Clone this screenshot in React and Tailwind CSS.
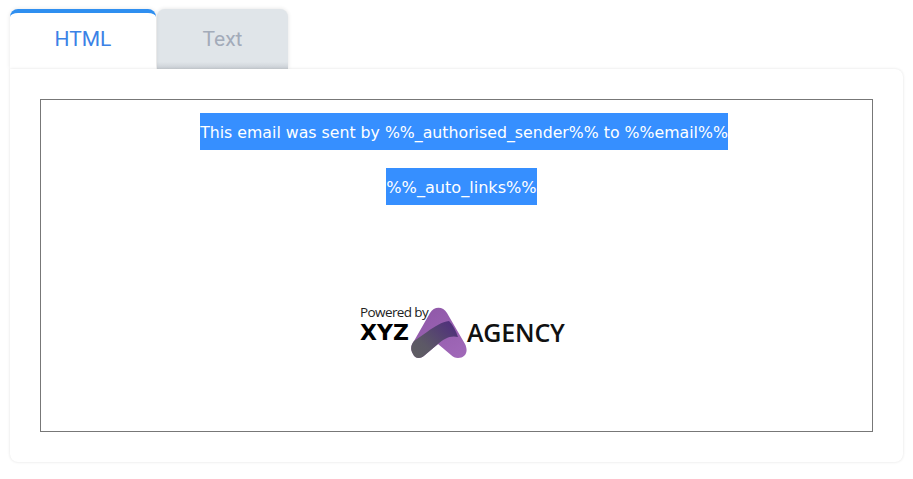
import React from 'react';

function Logo() {
  return (
    <div className="flex items-center w-[206px] h-[56px] relative">
      <div className="absolute left-0 top-[1px] font-['Open_Sans',sans-serif] text-[13.5px] leading-[14px] tracking-[-0.6px] text-[#222]">
        Powered by
      </div>
      <div className="absolute left-0 top-[19px] font-['DejaVu_Sans',sans-serif] font-bold text-[22px] leading-[20px] text-black">
        XYZ
      </div>
      <svg className="absolute left-[51px] top-[3px]" width="58" height="54" viewBox="0 0 58 54" xmlns="http://www.w3.org/2000/svg">
        <defs>
          <linearGradient id="logo-a" x1="20%" y1="0%" x2="80%" y2="100%">
            <stop stopColor="#8f58a8" offset="0%" />
            <stop stopColor="#a068b8" offset="100%" />
          </linearGradient>
          <linearGradient id="logo-b" x1="0%" y1="100%" x2="100%" y2="20%">
            <stop stopColor="#5f5f62" offset="0%" />
            <stop stopColor="#5c5866" offset="35%" />
            <stop stopColor="#4f2f7c" offset="100%" />
          </linearGradient>
        </defs>
        <path d="M19 6 C23 -1 32 -1 36 6 L54 37 C58 45 54 51 47 51 C44 51 42 50 40 48 L27 37 L14 48 C10 52 4 52 2 47 C-1 42 0 38 3 34 Z" fill="url(#logo-a)" />
        <path d="M3 34 L16 25 C24 19 31 15 38 14 C42 18 45 24 47 30 C39 28 33 32 27 37 L14 48 C10 52 4 52 2 47 C-1 42 0 38 3 34 Z" fill="url(#logo-b)" />
      </svg>
      <div className="absolute left-[107px] top-[13px] font-['Open_Sans',sans-serif] font-semibold text-[25px] leading-[30px] tracking-[-0.2px] text-[#111]">
        AGENCY
      </div>
    </div>
  );
}

export default function App() {
  return (
    <div className="min-h-[479px] bg-white pt-[9px] pl-[10px] pr-[10px]">
      {/* Tabs */}
      <div className="flex h-[60px] font-['Roboto',sans-serif] text-[21px]">
        <div className="w-[146px] rounded-t-[8px] border-t-[4px] border-[#2f8ff0] bg-white shadow-[0_0_4px_rgba(0,0,0,0.1)] flex items-center justify-center pb-[3px] text-[#3b82e6] relative z-10">
          HTML
        </div>
        <div className="w-[131px] ml-[1px] rounded-t-[8px] bg-[#e0e5e9] bg-[linear-gradient(to_bottom,#e0e5e9_53px,#c9ced4)] shadow-[0_0_4px_rgba(0,0,0,0.12)] flex items-center justify-center pt-[1px] text-[#a3abb9]">
          Text
        </div>
      </div>

      {/* Card */}
      <div className="w-[893px] h-[393px] rounded-b-[8px] rounded-tr-[8px] bg-white shadow-[0_0_3px_rgba(0,0,0,0.12)] p-[30px] relative z-20">
        <div className="h-[333px] border border-[#777] flex flex-col items-center font-['DejaVu_Sans',sans-serif] leading-[39px] text-white">
          <div className="mt-[13px] ml-[15px] bg-[#368fff] h-[37px] whitespace-nowrap text-[15.75px]">
            This email was sent by %%_authorised_sender%% to %%email%%
          </div>
          <div className="mt-[18px] ml-[10px] bg-[#368fff] h-[37px] whitespace-nowrap text-[16.1px]">
            %%_auto_links%%
          </div>
          <div className="mt-[99px] ml-[13px]">
            <Logo />
          </div>
        </div>
      </div>
    </div>
  );
}
